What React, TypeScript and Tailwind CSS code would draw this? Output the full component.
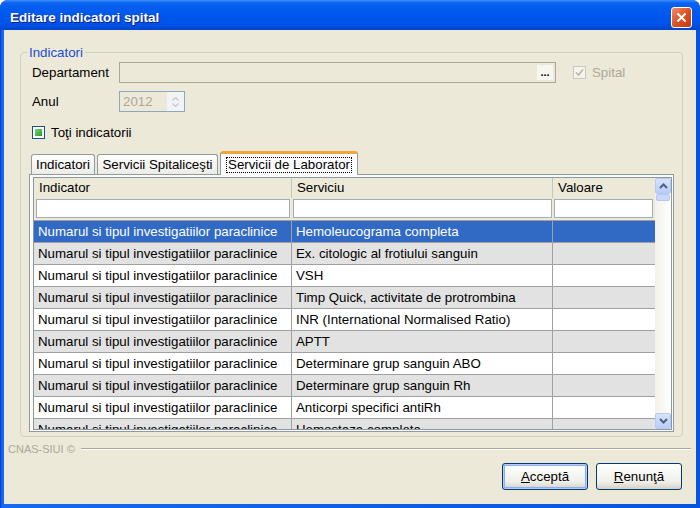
import React from 'react';

const rows = [
  'Hemoleucograma completa',
  'Ex. citologic al frotiului sanguin',
  'VSH',
  'Timp Quick, activitate de protrombina',
  'INR (International Normalised Ratio)',
  'APTT',
  'Determinare grup sanguin ABO',
  'Determinare grup sanguin Rh',
  'Anticorpi specifici antiRh',
  'Hemostaza completa',
];

const ScrollArrow: React.FC<{ up?: boolean }> = ({ up }) => (
  <div className="w-[16px] h-[16px] rounded-[2px] border border-[#B6C8F0] bg-[linear-gradient(to_bottom,#D6E3FD,#B9CDF7)] flex items-center justify-center">
    <svg width="9" height="6" viewBox="0 0 9 6">
      <path
        d={up ? 'M1 5 L4.5 1.5 L8 5' : 'M1 1 L4.5 4.5 L8 1'}
        fill="none"
        stroke="#4D6185"
        strokeWidth="2"
      />
    </svg>
  </div>
);

const App: React.FC = () => {
  return (
    <div className="w-[700px] h-[508px] bg-white font-['Liberation_Sans',Arial,sans-serif] text-[13.3px] text-black">
      <div className="w-full h-full flex flex-col rounded-t-[8px] overflow-hidden bg-[#0845D8]">
        {/* title bar */}
        <div className="h-[30px] pt-[4px] flex items-center bg-[linear-gradient(to_bottom,#3D8FFF_0%,#0A62F0_10%,#0058EE_45%,#0053E8_80%,#0043D0_100%)]">
          <span className="ml-[10px] mt-[3px] text-white font-bold text-[13.5px] [text-shadow:1px_1px_0_#0A1F8A]">
            Editare indicatori spital
          </span>
          <div className="ml-auto mr-[8px] w-[21px] h-[21px] rounded-[3px] border border-white bg-[linear-gradient(135deg,#F08C6A,#D8501F_55%,#C23C12)] flex items-center justify-center">
            <svg width="11" height="11" viewBox="0 0 11 11">
              <path d="M1.5 1.5 L9.5 9.5 M9.5 1.5 L1.5 9.5" stroke="white" strokeWidth="2" />
            </svg>
          </div>
        </div>

        {/* client area */}
        <div className="flex-1 flex px-[4px] pb-[4px] bg-[linear-gradient(to_right,#0831D9,#166AEE_2px,#0855DD)]">
          <div className="flex-1 flex flex-col bg-[#ECE9D8]">
            {/* group box */}
            <div className="relative mt-[22px] ml-[16px] w-[663px] h-[385px] border border-[#D0D0BF] rounded-[4px]">
              <span className="absolute -top-[8px] left-[6px] px-[2px] bg-[#ECE9D8] text-[#1A4DD0] leading-[15px]">
                Indicatori
              </span>

              {/* Departament */}
              <div className="flex items-center mt-[9px] h-[21px] pl-[11px]">
                <span className="w-[87px]">Departament</span>
                <div className="w-[437px] h-[21px] border border-[#A8A89A] bg-[#ECE9D8] flex items-center justify-end pr-[2px]">
                  <div className="w-[16px] h-[15px] bg-[#F7F6F0] flex items-end justify-center font-bold text-[11px] leading-[11px] pb-[2px]">
                    ...
                  </div>
                </div>
                <div className="ml-[17px] w-[13px] h-[13px] border border-[#CAC8BB] bg-[#F4F3EE] flex items-center justify-center">
                  <svg width="9" height="9" viewBox="0 0 9 9">
                    <path d="M1 4.5 L3.5 7 L8 1.5" fill="none" stroke="#B9B6A8" strokeWidth="1.6" />
                  </svg>
                </div>
                <span className="ml-[6px] text-[#ACA899]">Spital</span>
              </div>

              {/* Anul */}
              <div className="flex items-center mt-[8px] h-[21px] pl-[11px]">
                <span className="w-[87px]">Anul</span>
                <div className="w-[66px] h-[21px] border border-[#8FA6BE] bg-[#ECE9D8] flex items-center">
                  <span className="pl-[3px] text-[#ACA899] flex-1">2012</span>
                  <div className="w-[17px] h-full bg-[#F1F3F6] flex flex-col items-center justify-center gap-[2px]">
                    <svg width="7" height="4" viewBox="0 0 7 4">
                      <path d="M0.5 3.5 L3.5 0.5 L6.5 3.5" fill="none" stroke="#C2C5CC" strokeWidth="1.2" />
                    </svg>
                    <svg width="7" height="4" viewBox="0 0 7 4">
                      <path d="M0.5 0.5 L3.5 3.5 L6.5 0.5" fill="none" stroke="#C2C5CC" strokeWidth="1.2" />
                    </svg>
                  </div>
                </div>
              </div>

              {/* Toti indicatorii */}
              <div className="flex items-center mt-[14px] h-[13px] pl-[11px]">
                <div className="w-[13px] h-[13px] border border-[#1C5180] bg-white p-[2px]">
                  <div className="w-full h-full bg-[linear-gradient(135deg,#7FD07F,#21A121)]" />
                </div>
                <span className="ml-[6px]">Toţi indicatorii</span>
              </div>

              {/* tabs */}
              <div className="flex items-end mt-[12px] ml-[10px] h-[23px]">
                <div className="w-[64px] h-[20px] border border-b-0 border-[#919B9C] rounded-t-[3px] bg-[linear-gradient(to_bottom,#FFFFFF,#ECEBE6)] flex items-center justify-center">
                  Indicatori
                </div>
                <div className="ml-[2px] w-[121px] h-[20px] border border-b-0 border-[#919B9C] rounded-t-[3px] bg-[linear-gradient(to_bottom,#FFFFFF,#ECEBE6)] flex items-center justify-center">
                  Servicii Spitaliceşti
                </div>
                <div className="relative z-10 -mb-[1px] ml-[2px] w-[138px] h-[24px] border border-b-0 border-[#919B9C] border-t-[3px] border-t-[#F1A53C] rounded-t-[3px] bg-[#FCFCFE] flex items-center justify-center">
                  <span className="border border-dotted border-black px-[1px] leading-[14px]">
                    Servicii de Laborator
                  </span>
                </div>
              </div>

              {/* tab panel */}
              <div className="ml-[8px] w-[645px] h-[258px] border border-[#919B9C] bg-[#FAFAF8] pl-[3px] pt-[2px]">
                <div className="w-[639px] h-[253px] border border-[#8C98A4] bg-white flex overflow-hidden">
                  <div className="w-[621px] flex flex-col">
                    {/* header */}
                    <div className="flex h-[20px] bg-[#ECE9D8] shrink-0">
                      <div className="w-[258px] border-r border-[#C7C5B8] pl-[5px] flex items-center">Indicator</div>
                      <div className="w-[261px] border-r border-[#C7C5B8] pl-[5px] flex items-center">Serviciu</div>
                      <div className="w-[101px] pl-[5px] flex items-center">Valoare</div>
                    </div>
                    {/* filter row */}
                    <div className="flex h-[23px] bg-[#ECE9D8] shrink-0 border-b border-[#A0A0A0]">
                      <div className="w-[258px] px-[2px] pt-[1px]">
                        <div className="h-[19px] border border-[#A5ACB2] bg-white" />
                      </div>
                      <div className="w-[261px] px-[1px] pt-[1px]">
                        <div className="h-[19px] border border-[#A5ACB2] bg-white" />
                      </div>
                      <div className="w-[101px] px-[1px] pt-[1px]">
                        <div className="h-[19px] border border-[#A5ACB2] bg-white" />
                      </div>
                    </div>
                    {/* data rows */}
                    {rows.map((s, i) => {
                      const sel = i === 0;
                      const bg = sel ? 'bg-[#316AC5] text-white' : i % 2 === 1 ? 'bg-[#E2E2E2]' : 'bg-white';
                      return (
                        <div key={i} className={`flex h-[22px] shrink-0 border-b border-[#A0A0A0] ${bg}`}>
                          <div className="w-[258px] border-r border-[#A0A0A0] pl-[4px] flex items-center whitespace-nowrap">
                            Numarul si tipul investigatiilor paraclinice
                          </div>
                          <div className="w-[261px] border-r border-[#A0A0A0] pl-[4px] flex items-center whitespace-nowrap">
                            {s}
                          </div>
                          <div className="w-[101px]" />
                        </div>
                      );
                    })}
                  </div>
                  {/* scrollbar */}
                  <div className="w-[16px] h-full bg-[linear-gradient(to_right,#F3F1EC,#FEFEFB)] flex flex-col">
                    <ScrollArrow up />
                    <div className="h-[7px] mx-[1px] rounded-[2px] border border-[#B6C8F0] bg-[#C8D7FA]" />
                    <div className="flex-1" />
                    <ScrollArrow />
                  </div>
                </div>
              </div>
            </div>

            {/* footer line */}
            <div className="flex items-center mt-[6px] h-[12px] pl-[4px] pr-[5px]">
              <span className="text-[11px] text-[#ACA899] leading-[12px]">CNAS-SIUI ©</span>
              <div className="flex-1 ml-[6px] h-[2px] border-t border-[#ACA899] border-b border-b-white" />
            </div>

            {/* buttons */}
            <div className="flex justify-end mt-[8px] pr-[14px] gap-[8px]">
              <button className="w-[86px] h-[27px] rounded-[3px] border border-[#003C74] bg-[linear-gradient(to_bottom,#FFFFFF,#F0F0EA_70%,#D6D0C5)] shadow-[inset_0_0_0_1px_#B5CCF6,inset_0_0_0_2px_#8EAEF2]">
                <span className="underline">A</span>cceptă
              </button>
              <button className="w-[86px] h-[27px] rounded-[3px] border border-[#003C74] bg-[linear-gradient(to_bottom,#FFFFFF,#F0F0EA_70%,#D6D0C5)]">
                <span className="underline">R</span>enunţă
              </button>
            </div>
          </div>
        </div>
      </div>
    </div>
  );
};

export default App;
